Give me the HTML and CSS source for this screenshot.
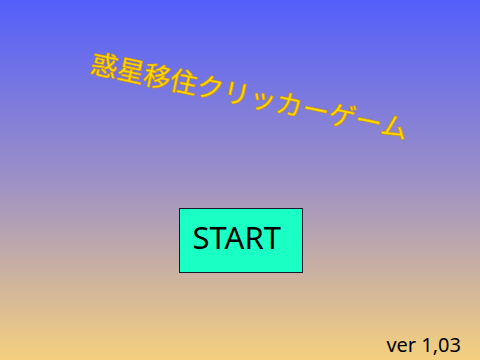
FILE: index.html
```html
<!DOCTYPE html>
<html lang="ja">
<head>
<meta charset="utf-8">
<link rel="stylesheet" href="styles.css">
</head>
<body>
<div class="screen">
  <div class="title-wrap">
    <h1 class="title">惑星移住クリッカーゲーム</h1>
  </div>
  <div class="start-row">
    <button class="start">START</button>
  </div>
  <div class="version">ver 1,03</div>
</div>
</body>
</html>
```
FILE: styles.css
```css
html, body {
  margin: 0;
  padding: 0;
}
.screen {
  width: 480px;
  height: 360px;
  background: linear-gradient(to bottom, #535ffb 0%, #9d90c6 50%, #f5d07e 100%);
  display: flex;
  flex-direction: column;
  font-family: "Noto Sans", "Noto Sans CJK JP", sans-serif;
  overflow: hidden;
}
.title-wrap {
  display: flex;
  justify-content: center;
  padding-top: 77px;
  padding-left: 20px;
  box-sizing: border-box;
  height: 148px;
}
.title {
  margin: 0;
  font-family: "Noto Sans CJK JP", sans-serif;
  font-weight: normal;
  font-size: 27px;
  line-height: 36px;
  height: 36px;
  color: #ffdc00;
  white-space: nowrap;
  transform: rotate(12deg);
  -webkit-text-stroke: 0.4px #e0a000;
  text-shadow: 0 0 1px #c98a10, 0 0 1px #c98a10, 0 0 1px #c98a10;
}
.start-row {
  display: flex;
  justify-content: center;
  padding-top: 60px;
  padding-left: 1px;
}
.start {
  width: 124px;
  height: 65px;
  box-sizing: border-box;
  background: #1affc4;
  border: 1px solid #1a1a2e;
  font-family: "Noto Sans", sans-serif;
  font-size: 31px;
  color: #000;
  text-align: left;
  padding: 0 0 8px 13px;
  margin: 0;
}
.version {
  margin-top: auto;
  align-self: flex-end;
  margin-right: 19px;
  margin-bottom: 2px;
  font-size: 20px;
  line-height: 26px;
  color: #000;
}
```
